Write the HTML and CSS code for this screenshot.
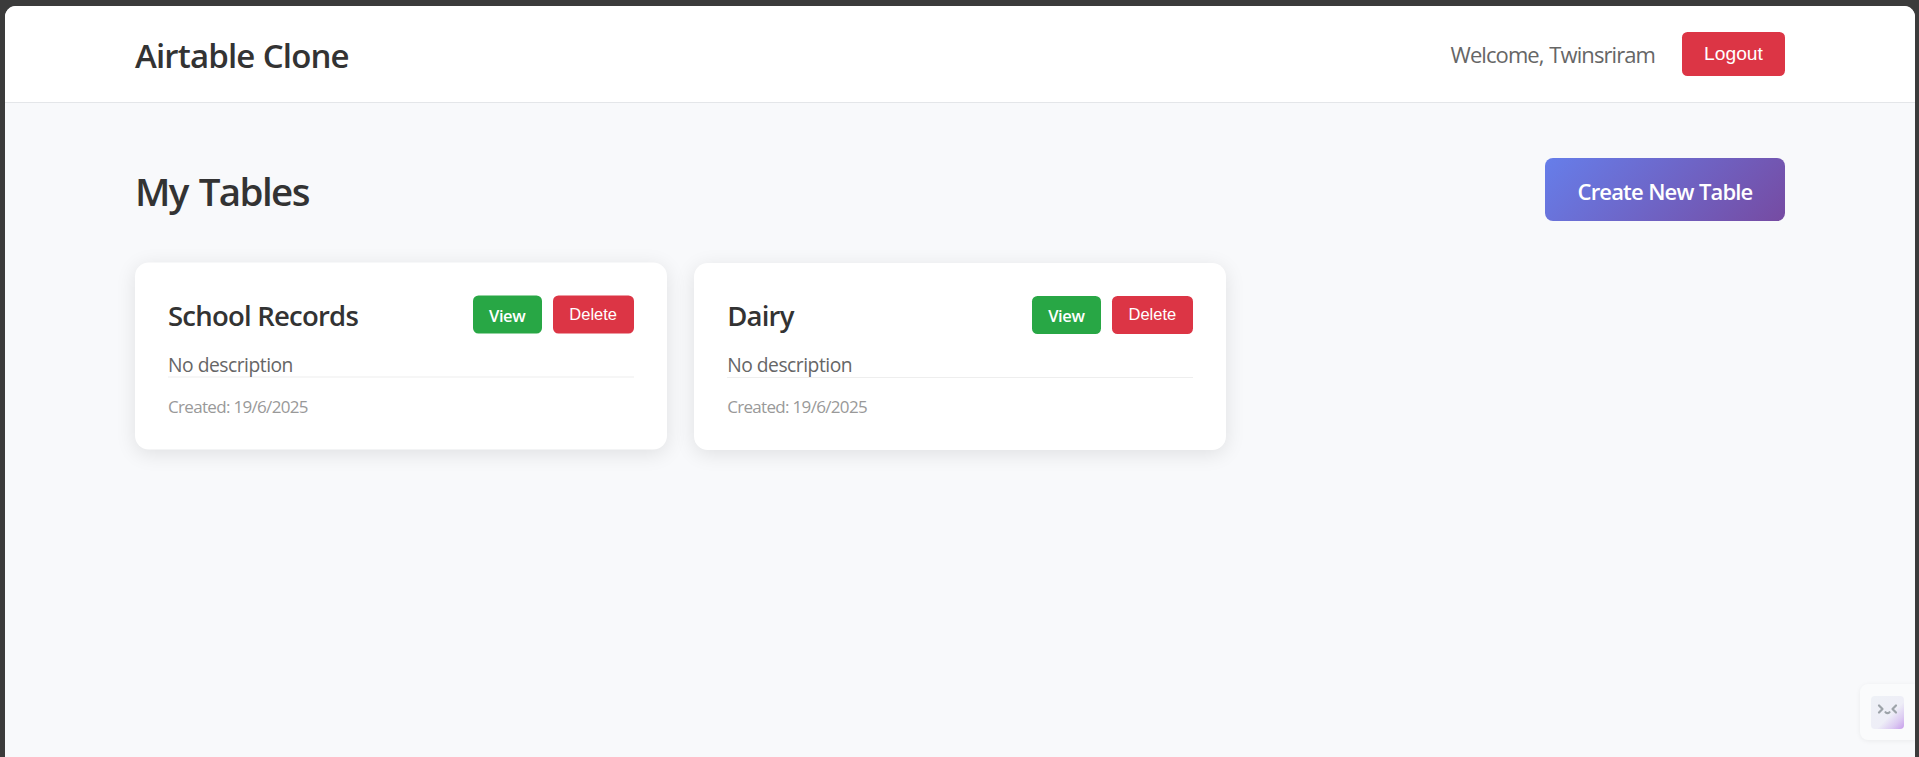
FILE: index.html
```html
<!DOCTYPE html>
<html lang="en">
<head>
<meta charset="utf-8">
<title>Airtable Clone</title>
<link rel="stylesheet" href="styles.css">
</head>
<body>
<div class="page">
  <header class="header">
    <div class="container header-row">
      <h1 class="brand">Airtable Clone</h1>
      <div class="user">
        <span class="welcome">Welcome, Twinsriram</span>
        <button class="btn logout">Logout</button>
      </div>
    </div>
  </header>
  <main class="container main">
    <div class="title-row">
      <h2 class="title">My Tables</h2>
      <a class="create">Create New Table</a>
    </div>
    <div class="grid">
      <article class="card card-raised">
        <div class="card-head">
          <h3 class="card-title">School Records</h3>
          <div class="actions"><a class="view">View</a><button class="btn delete">Delete</button></div>
        </div>
        <p class="desc">No description</p>
        <div class="meta">Created: 19/6/2025</div>
      </article>
      <article class="card">
        <div class="card-head">
          <h3 class="card-title">Dairy</h3>
          <div class="actions"><a class="view">View</a><button class="btn delete">Delete</button></div>
        </div>
        <p class="desc">No description</p>
        <div class="meta">Created: 19/6/2025</div>
      </article>
    </div>
  </main>
  <div class="widget">
    <svg class="face" viewBox="0 0 33 33" fill="none" stroke="#9da3a9" stroke-width="2.2" stroke-linecap="round" stroke-linejoin="round">
      <path d="M8 9.500l3.500 3.500L8 16.500M25 9.500L21.500 13l3.500 3.500M14.500 16.200q2 2 4 0"/>
    </svg>
  </div>
</div>
</body>
</html>
```
FILE: styles.css
```css
* { box-sizing: border-box; margin: 0; }
body {
  height: 757px;
  padding: 6px 4px 0 5px;
  overflow: hidden;
  background: #3b3b3b;
  font-family: "Open Sans", "Noto Sans", sans-serif;
  color: #333;
}
.page {
  position: relative;
  height: 751px;
  border-radius: 11px 11px 0 0;
  background: #f8f9fb;
  overflow: hidden;
}
.container { width: 1650px; margin: 0 auto; }
.header { height: 97px; background: #fff; border-bottom: 1px solid #e4e6e9; }
.header-row { display: flex; justify-content: space-between; height: 96px; }
.brand { padding-top: 27px; font-size: 33px; line-height: 45px; font-weight: 600; letter-spacing: -0.85px; word-spacing: 0.6px; white-space: nowrap; }
.user { display: flex; align-items: flex-start; gap: 27px; padding-top: 26px; }
.welcome { padding-top: 7px; font-size: 22px; line-height: 30px; letter-spacing: -0.92px; word-spacing: 1px; color: #666; white-space: nowrap; }
.btn {
  border: 0;
  border-radius: 5.5px;
  background: #dc3545;
  color: #fff;
  font-family: "Liberation Sans", Arial, sans-serif;
}
.logout { width: 103px; height: 44px; padding: 0 0 1px; font-size: 19.25px; }
.main { padding-top: 55px; }
.title-row { display: flex; justify-content: space-between; height: 63px; }
.title { padding-top: 6px; font-size: 38.5px; line-height: 54px; font-weight: 600; letter-spacing: -1.6px; word-spacing: 2.4px; white-space: nowrap; }
.create {
  display: flex;
  justify-content: center;
  width: 240px;
  height: 63px;
  padding-top: 18px;
  border-radius: 8px;
  background: linear-gradient(135deg, #667eea 0%, #764ba2 100%);
  color: #fff;
  font-size: 22px;
  line-height: 30px;
  font-weight: 600;
  letter-spacing: -0.85px;
  word-spacing: 0.6px;
  white-space: nowrap;
}
.grid { display: grid; grid-template-columns: repeat(3, 1fr); gap: 27.5px; margin-top: 42px; }
.card {
  height: 187px;
  padding: 33px;
  border-radius: 13.75px;
  background: #fff;
  box-shadow: 0 4px 20px rgba(0, 0, 0, 0.1);
}
.card-raised { transform: translateY(-0.5px); }
.card-head { display: flex; justify-content: space-between; height: 38px; }
.card-title { padding-top: 1px; font-size: 27.5px; line-height: 38px; font-weight: 600; letter-spacing: -0.77px; white-space: nowrap; }
.actions { display: flex; gap: 11px; }
.view {
  display: flex;
  justify-content: center;
  width: 69px;
  height: 38px;
  padding-top: 8px;
  border-radius: 5.5px;
  background: #28a745;
  color: #fff;
  font-size: 16.5px;
  line-height: 23px;
  font-weight: 600;
  letter-spacing: -0.4px;
}
.delete { width: 81px; height: 38px; padding: 0 0 1px; font-size: 16.5px; }
.desc { height: 43px; padding-top: 18px; font-size: 19.25px; line-height: 26px; letter-spacing: -0.48px; color: #666; }
.meta { padding-top: 17px; border-top: 1px solid #eee; font-size: 17px; line-height: 24px; letter-spacing: -0.68px; color: #999; }
.widget {
  position: absolute;
  right: 0;
  bottom: 17px;
  width: 55px;
  height: 56px;
  padding: 12px 11px;
  border-radius: 8px 0 0 8px;
  background: #fafbfc;
  box-shadow: 0 1px 5px rgba(0, 0, 0, 0.06);
}
.face {
  display: block;
  width: 33px;
  height: 33px;
  border-radius: 4px;
  background: linear-gradient(135deg, #eef1f6 0%, #eeeef7 58%, #dccbf2 80%, #c79deb 100%);
}
```
